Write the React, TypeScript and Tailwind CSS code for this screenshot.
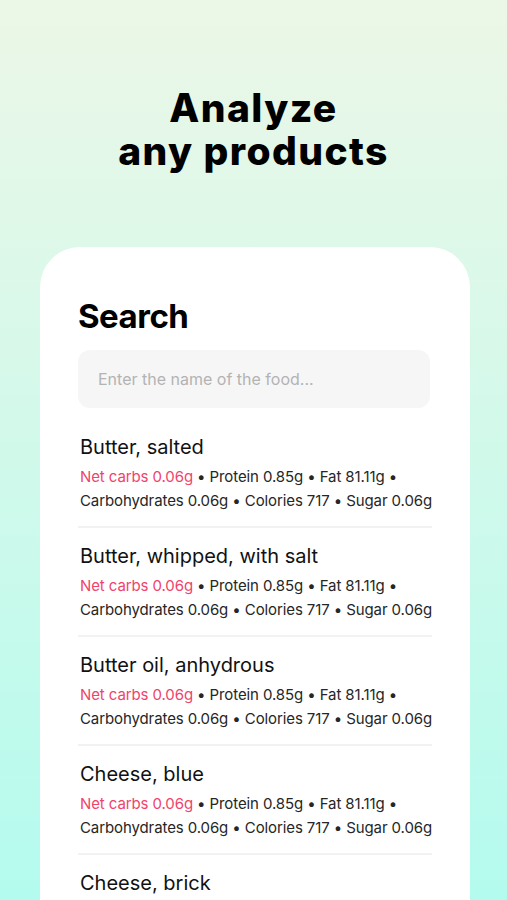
const foods = [
  'Butter, salted',
  'Butter, whipped, with salt',
  'Butter oil, anhydrous',
  'Cheese, blue',
]

function FoodRow({ name }: { name: string }) {
  return (
    <div className="pt-[14px] pb-[13px] border-b-2 border-[#f2f2f2]">
      <div className="text-[20px] leading-[28px] text-[#111111] pl-[2px]">{name}</div>
      <div className="mt-[4px] text-[15px] leading-[24px] text-[#262626] pl-[2px] whitespace-nowrap tracking-[-0.1px]">
        <div>
          <span className="text-[#f0436c]">Net carbs 0.06g</span> • Protein 0.85g • Fat 81.11g •
        </div>
        <div>Carbohydrates 0.06g • Colories 717 • Sugar 0.06g</div>
      </div>
    </div>
  )
}

export default function App() {
  return (
    <div
      className="h-[900px] w-full overflow-hidden bg-gradient-to-b from-[#ecf7e7] to-[#b3fbee]"
      style={{ fontFamily: 'Inter, "Noto Sans", sans-serif' }}
    >
      <h1 className="pt-[86px] text-center text-[39px] leading-[43px] font-extrabold text-black tracking-[1.4px]">
        Analyze
        <br />
        any products
      </h1>

      <div className="mt-[75px] ml-[40px] mr-[37px] h-[700px] rounded-[40px] bg-white px-[38px] pt-[49px]">
        <h2 className="text-[33px] leading-[40px] font-bold text-black tracking-[-0.5px]">Search</h2>
        <div className="mt-[14px] mr-[2px] flex h-[58px] items-center rounded-[12px] bg-[#f6f6f6] px-[20px]">
          <span className="text-[16px] text-[#b3b3b3]">Enter the name of the food...</span>
        </div>
        <div className="mt-[11px]">
          {foods.map((f) => (
            <FoodRow key={f} name={f} />
          ))}
          <div className="pt-[14px]">
            <div className="text-[20px] leading-[28px] text-[#111111] pl-[2px]">Cheese, brick</div>
          </div>
        </div>
      </div>
    </div>
  )
}
